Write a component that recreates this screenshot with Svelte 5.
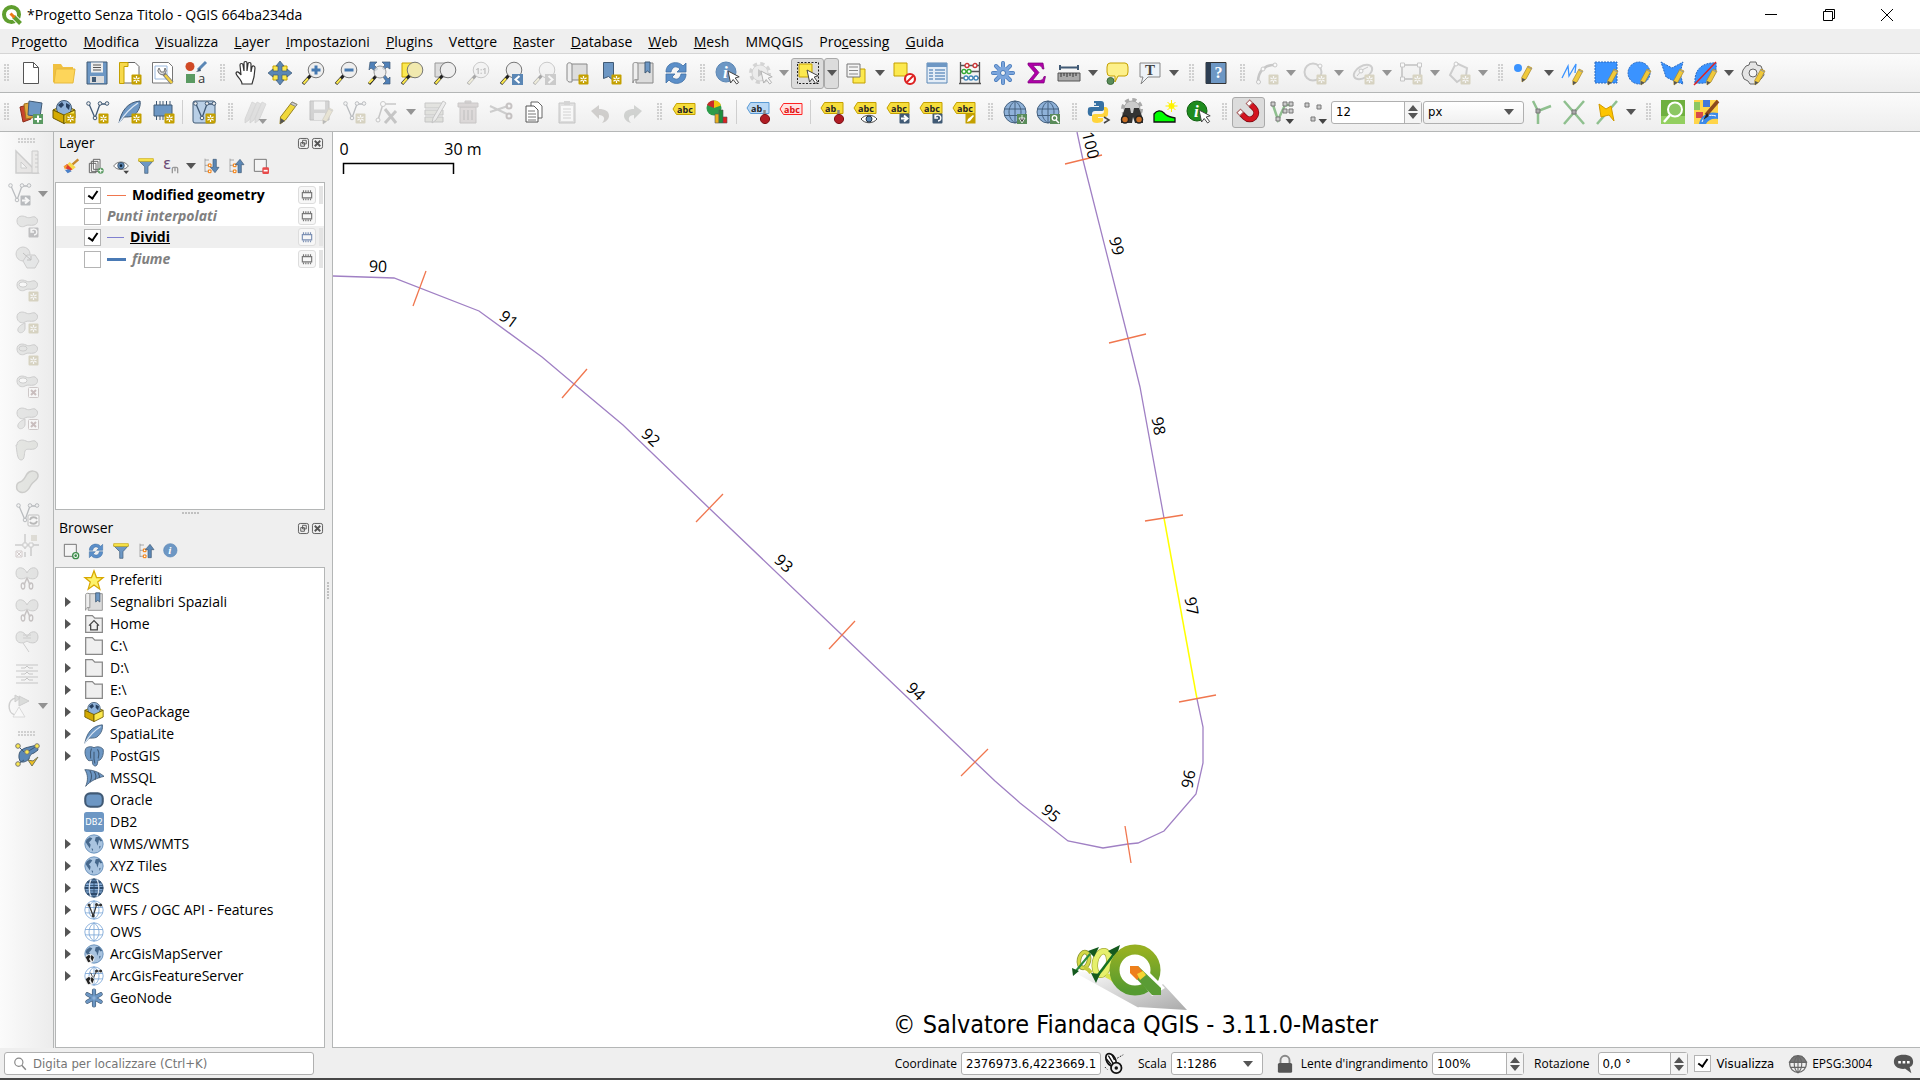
<script lang="ts">
  interface Item {
    kind: "grip" | "sep" | "button" | "arrow";
    icon?: string;
    label?: string;
    off?: boolean;
    on?: boolean;
  }

  const grip: Item = { kind: "grip" };
  const sep: Item = { kind: "sep" };
  const b = (icon: string, label: string): Item => ({ kind: "button", icon, label });
  const off = (icon: string, label: string): Item => ({ kind: "button", icon, label, off: true });
  const on = (icon: string, label: string): Item => ({ kind: "button", icon, label, on: true });
  const arrow = (state = ""): Item => ({
    kind: "arrow",
    label: "Altre opzioni",
    off: state === "off",
    on: state === "on",
  });

  // --- shared icon parts, all on a 24x24 grid ---
  const star =
    '<rect x="13.5" y="13.5" width="10" height="10" rx="1" fill="#c4a000"/><path d="M18.5 15v7M15.4 16.8l6.2 3.5M21.6 16.8l-6.2 3.5" stroke="#fff" stroke-width="1.3"/><circle cx="18.5" cy="18.5" r="1" fill="#c4a000"/>';
  const cursor = '<path d="M13 10l2.600 12 2.600-3.500 3.400 4.500 2-1.500-3.400-4.500 4-1.200z" fill="#fff" stroke="#444"/>';
  const more = '<path d="M15.500 19h8.500l-4.200 5z" fill="#444"/>';
  const lens = (fill: string) =>
    `<path d="M10 14L2 23" stroke="#222" stroke-width="3.200"/><path d="M7 17.500L2.500 22.500" stroke="#fce94f" stroke-width="2"/><circle cx="15" cy="9" r="7.800" fill="${fill}" stroke="#777"/>`;
  const pencil =
    '<path d="M20 8l4 2-6 11-4 3-.3-4.500z" fill="#f0c93a" stroke="#a3842a" stroke-width=".7"/><path d="M14 20l3.500 1.500L14 24z" fill="#555"/><path d="M19.500 9l4 2" stroke="#999"/>';
  const vline =
    '<path d="M4 4l6 14 5-14h6" fill="none" stroke="#415a75" stroke-width="1.300"/><g fill="#eee" stroke="#415a75"><circle cx="3.500" cy="3.500" r="1.800"/><circle cx="10" cy="18" r="1.800"/><circle cx="15" cy="3.500" r="1.800"/><circle cx="22" cy="3.500" r="1.800"/></g>';
  const globe = (fill: string, line: string) =>
    `<circle cx="12" cy="12" r="11" fill="${fill}" stroke="${line}"/><path d="M1.500 9h21M1.500 15.500h21M12 1v22M12 1c-8 5-8 17 0 22M12 1c8 5 8 17 0 22" fill="none" stroke="${line}"/>`;
  const land =
    '<circle cx="12" cy="12" r="11" fill="#a9c4e0" stroke="#5b87b5"/><path d="M3 7l4-3 3 1-2 3-2 2 2 3-1 4-3-4-2-3zM14 4l4-1 4 5-2 1-2-2-1 4-1 3-1-4-2-2zM18 15l2-1-1 4zM9 17l2 1-1 3z" fill="#46688c"/>';
  const tag = (fill: string, line: string, text: string, label = "abc") =>
    `<path d="M1 8l3.500-5.500H23v11H4.500z" fill="${fill}" stroke="${line}"/><text x="5" y="11.500" font-family="Open Sans, sans-serif" font-weight="700" font-size="9" fill="${text}">${label}</text>`;
  const ytag = tag("#f6dd3b", "#c4a000", "#222");
  const pin = '<path d="M18.500 10v9" stroke="#888" stroke-width="2.500"/><circle cx="19" cy="19" r="4.600" fill="#b01c24" stroke="#7c1117"/>';
  const blob = '<path d="M2 7c0-5 5-6 9-4s6-1 9 0c4 2 3 7-1 8-4 1-6-1-9 1S2 12 2 7z" fill="#c4ccc4" stroke="#888"/>';
  const hole = '<ellipse cx="8" cy="6.500" rx="4" ry="2.600" fill="#fff" stroke="#888"/>';
  const drop = '<path d="M10 13c-5 2-8 5-7 8s6 2 7-2z" fill="#c4ccc4" stroke="#888"/>';
  const cross = '<rect x="13.500" y="13.500" width="10" height="10" rx="1" fill="#fff" stroke="#a77"/><path d="M16 16l5 5M21 16l-5 5" stroke="#b55" stroke-width="2"/>';
  const turn = (fill: string) =>
    `<rect x="13.500" y="13.500" width="10" height="10" rx="1" fill="${fill}"/><path d="M16 17a3 3 0 1 1 3 4M16 14.500V18h3" fill="none" stroke="#fff" stroke-width="1.300"/>`;
  const goRight = '<rect x="13.500" y="13.500" width="10" height="10" rx="1" fill="#415a75"/><path d="M15 18.500h5M18 15.500l3.500 3-3.500 3" fill="none" stroke="#fff" stroke-width="2"/>';
  const wings = '<path d="M12 11C8 14 1 14 1 7s8-7 11 0c3-7 11-7 11 0s-7 7-11 4z" fill="#c4ccc4" stroke="#888"/>';
  const treeLines = '<path d="M3 1v20M3 3h6M3 11h5M3 20h5" stroke="#888" fill="none"/><path d="M8 9h4v4H8zM8 18h4v4H8z" fill="#fff" stroke="#f57900" stroke-width="1.500"/>';
  const pkg =
    '<path d="M1 10l11-5 11 5-11 5z" fill="#e8d050" stroke="#6b5800"/><circle cx="12" cy="8" r="7.500" fill="#8fb2d9" stroke="#415a75"/><path d="M6 5l4-3 2 3-3 3zM14 3l4 2-1 5-3-3z" fill="#274060"/><path d="M1 10l11 5v8.500L1 18z" fill="#d4aa00" stroke="#6b5800"/><path d="M23 10l-11 5v8.500L23 18z" fill="#fce94f" stroke="#6b5800"/>';
  const feather =
    '<path d="M1 23C3 12 9 2 22 1c1 4-1 11-7 15-3 1-6 1-9 1z" fill="#6d97c4" stroke="#415a75"/><path d="M1 23C6 15 12 8 20 3" fill="none" stroke="#dce8f5" stroke-width="1.300"/>';
  const chip =
    '<path d="M3 5h18v11H3z" fill="#6d97c4" stroke="#415a75"/><path d="M5.500 1v4M9 1v4M12 1v4M15.500 1v4M19 1v4M5.500 16v4M9 16v4M12 16v4M15.500 16v4M19 16v4" stroke="#415a75"/>';
  const refresh =
    '<path d="M2 11C2 1 14-1 19 5l3-3v9h-9l3-3C12 4 8 6 7 11zM22 13c0 10-12 12-17 6l-3 3v-9h9l-3 3c4 4 8 2 9-3z" fill="#5b8fc9" stroke="#3f6fa5" stroke-width=".8"/>';
  const funnel = '<path d="M1 4h22l-8 9v10h-5V13z" fill="#6d97c4" stroke="#415a75"/><path d="M1 1h22v4H1z" fill="#fce94f" stroke="#c4a000"/>';
  const book = '<path d="M5 2h17v20H5z" fill="#dcdcdc" stroke="#888"/><path d="M2 3c0-2 5-2 5 0v16c-3-1-5 0-5 3z" fill="#eee" stroke="#888"/>';
  const infoDisc = (fill: string, line: string) =>
    `<circle cx="11" cy="11" r="10" fill="${fill}" stroke="${line}"/><text x="8" y="16.500" font-family="Liberation Serif, serif" font-style="italic" font-weight="700" font-size="17" fill="#fff">i</text>`;
  const info = infoDisc("#6d97c4", "#5b87b5");
  const gearRing = (fill: string, line: string, y: number) =>
    `<circle cx="12" cy="${y}" r="9" fill="none" stroke="${line}" stroke-width="4" stroke-dasharray="4 3.070"/><circle cx="12" cy="${y}" r="8" fill="${fill}" stroke="${line}"/>`;
  const folder = '<path d="M2 2h8l3 3h9v17H2z" fill="#efefef" stroke="#888" stroke-width="1.500"/>';
  const snap = (d: string) => `<path d="${d}" stroke="#8fc08f" stroke-width="2.500" fill="none"/>`;

  const icons: Record<string, string> = {
    new: '<path d="M4.500 1.500h10l5 5v16h-15z" fill="#fff" stroke="#555"/><path d="M14.500 1.500v5h5" fill="none" stroke="#555"/>',
    open: '<path d="M1 3h8l2 3h10v15H1z" fill="#f0c040"/><path d="M4 8h19l-2 14H2z" fill="#fdd55a" stroke="#e6b93c"/>',
    save: '<path d="M2 1h20v22H2z" fill="#6d97c4" stroke="#415a75"/><path d="M6 1.500h12v10H6z" fill="#eee"/><path d="M8 4h8M8 6.500h8M8 9h8" stroke="#555"/><path d="M5 15h14v7H5z" fill="#ddd"/><path d="M7 16h4v5H7z" fill="#415a75"/>',
    layout: '<path d="M4 1.500h13l4 4V22H4z" fill="#fff" stroke="#666"/><path d="M1.500 1.500H10v4H6v17H1.500z" fill="#f7d94c" stroke="#c4a000"/>' + star,
    layouts: '<path d="M1.500 1.500h16l4 4V22h-20z" fill="#fff" stroke="#777"/><path d="M4 5h12v13H4z" fill="none" stroke="#9ab8dd"/><path d="M13 13l8 9" stroke="#777" stroke-width="4"/><path d="M14 14l7 8" stroke="#f1cf45" stroke-width="2.500"/><path d="M8 7a4 4 0 1 0 6 0l-1 4h-3z" fill="#ddd" stroke="#777"/>',
    style: '<circle cx="6" cy="5.500" r="4.500" fill="#d04a26"/><path d="M22 1L14 9" stroke="#5b87b5" stroke-width="3"/><path d="M16 7l-4 4 5-1z" fill="#415a75"/><path d="M2 13h9v9H2z" fill="#5a9a62"/><text x="14" y="22" font-family="Open Sans, sans-serif" font-size="13" fill="#333">a</text>',
    pan: '<path d="M7 23c0-4-6-8-6-11 1-2 3-1 5 2L5 4c0-2 3-2 3 0l1 6V2c0-2 3-2 3 0v8l1-7c0-2 3-2 3 0v8l1-5c1-2 3-1 3 1l-1 9-2 7z" fill="#fff" stroke="#333" stroke-width="1.200"/>',
    panSel: '<path d="M5 5h14v14H5z" fill="#fce94f" stroke="#c4a000"/><path d="M12 0l4 5h-2v5h5V8l5 4-5 4v-2h-5v5h2l-4 5-4-5h2v-5H5v2l-5-4 5-4v2h5V5H8z" fill="#5b87b5" stroke="#415a75" stroke-width=".7"/>',
    zoomIn: lens("#eee") + '<path d="M15 4.500v9M10.500 9h9" stroke="#4478b0" stroke-width="3"/>',
    zoomOut: lens("#eee") + '<path d="M10.500 9h9" stroke="#4478b0" stroke-width="3"/>',
    zoomFull: '<path d="M3 1h7L7 4l4 4-3 2-4-3-2 2zM23 1v7l-3-2-3 3-2-2 3-3-3-3zM23 23h-7l3-3-3-4 2-2 3 4 2-2z" fill="#4f80b8" stroke="#415a75" stroke-width=".7"/><path d="M9 15l-7 8" stroke="#222" stroke-width="3"/><path d="M6 18l-4 4" stroke="#fce94f" stroke-width="2"/><circle cx="13" cy="11" r="6" fill="#eee" fill-opacity=".8" stroke="#999"/>',
    zoomSel: '<path d="M2 2h14v14H2z" fill="#fce94f" stroke="#c4a000"/>' + lens("#f1e9ae"),
    zoomLayer: '<path d="M2 2h14v14H2z" fill="#ddd" stroke="#999"/>' + lens("#eee"),
    zoomNative: lens("#eee") + '<text x="9.500" y="12.500" font-family="Open Sans, sans-serif" font-weight="700" font-size="8" fill="#666">1:1</text>',
    zoomLast: lens("#eee") + '<path d="M13 13h11v11H13z" fill="#5b87b5"/><path d="M20.500 15l-4 3.500 4 3.500" fill="none" stroke="#fff" stroke-width="2"/>',
    zoomNext: lens("#eee") + '<path d="M13 13h11v11H13z" fill="#888"/><path d="M16.500 15l4 3.500-4 3.500" fill="none" stroke="#fff" stroke-width="2"/>',
    mapView: '<path d="M5 3h17v16H5z" fill="#ddd" stroke="#888"/><path d="M2 4c0-3 5-3 5 0v17H4c-2-1-2-2-2-3z" fill="#eee" stroke="#888"/>' + star,
    bookmarkNew: '<path d="M5.500 1.500h10v18l-5-4-5 2z" fill="#6d97c4" stroke="#415a75"/>' + star,
    bookmarks: book + '<path d="M14 1h5v11l-2.500-2L14 12z" fill="#6d97c4" stroke="#415a75"/>',
    refresh,
    identify: info + cursor,
    action: gearRing("#ddd", "#999", 12) + '<path d="M10 8l6 4-6 4z" fill="#777"/>' + cursor,
    select: '<path d="M1.500 1.500h21v21h-21z" fill="none" stroke="#222" stroke-dasharray="2 1.500"/><path d="M3 3h13v13H3z" fill="#fce94f" stroke="#c4a000"/><path d="M11 9l2.600 12 2.600-3.500 3.400 5 2-1.500-3.400-5 4-1.200z" fill="#fff" stroke="#444"/>',
    selectForm: '<path d="M9 8h12v14H9z" fill="#fce94f" stroke="#c4a000"/><path d="M3 3h13v13H3z" fill="#f4f4f4" stroke="#777"/><path d="M5 6h9M5 9.500h9M5 13h9" stroke="#888"/>',
    deselect: '<path d="M2 2h13v13H2z" fill="#fce94f" stroke="#c4a000"/><circle cx="18" cy="18" r="5" fill="#fff" stroke="#d22" stroke-width="2.200"/><path d="M14.500 21.500l7-7" stroke="#d22" stroke-width="2"/>',
    table: '<path d="M2 2h20v20H2z" fill="#e4edf7" stroke="#5b87b5"/><path d="M2 2h20v4H2z" fill="#6d97c4"/><path d="M4 9h4M4 12h4M4 15h4M4 18h4M10 9h10M10 12h10M10 15h10M10 18h10" stroke="#6d97c4" stroke-width="1.500"/>',
    abacus: '<path d="M2.500 1v21M21.500 1v21M1 22.500h22M3 4.500h18M3 10.500h18M3 17h18" stroke="#555" stroke-width="1.300"/><g fill="#fff" stroke-width="1.300"><g stroke="#c33"><circle cx="9" cy="4.500" r="2"/><circle cx="17" cy="4.500" r="2"/></g><g stroke="#3a3"><circle cx="6" cy="10.500" r="2"/><circle cx="11" cy="10.500" r="2"/></g><g stroke="#48b"><circle cx="8" cy="17" r="2"/><circle cx="13" cy="17" r="2"/><circle cx="18" cy="17" r="2"/></g></g>',
    gear: '<path d="M12 2v20M2 12h20M5 5l14 14M19 5L5 19" stroke="#4478b8" stroke-width="4" stroke-linecap="round"/><path d="M12 2v20M2 12h20M5 5l14 14M19 5L5 19" stroke="#7ba5dc" stroke-width="2.500" stroke-linecap="round"/><circle cx="12" cy="12" r="6.500" fill="#7ba5dc"/><circle cx="12" cy="12" r="2.500" fill="#f3f3f3" stroke="#4478b8"/>',
    sigma: '<path d="M4 2h15l1 6h-1.500c-1-3-2-3.500-5-3.500H9l6 7-6.500 8H15c3 0 4-1 5-4h1.500L20 22H4v-1.500L11 12 4 4z" fill="#b000a8" stroke="#7a0078" stroke-width=".7"/>',
    measure: '<path d="M3 6.500h18M3 4v5M21 4v5" stroke="#415a75" stroke-width="2"/><path d="M1 12h22v8H1z" fill="#aaa" stroke="#555"/><path d="M4 12v4M7 12v3M10 12v4M13 12v3M16 12v4M19 12v3" stroke="#333"/>',
    tips: '<path d="M5 2h15q3 0 3 4v5q0 4-3 4h-7l-3 6v-6H5q-3 0-3-4V6q0-4 3-4z" fill="#fdf08a" stroke="#c4a000"/><circle cx="5.500" cy="20" r="3.500" fill="#5a8c5a" stroke="#3a6a3a"/>',
    text: '<path d="M2 2h20v14h-12l-7 7 2-7H2z" fill="#eef3f8" stroke="#888"/><text x="7" y="14" font-family="Liberation Serif, serif" font-weight="700" font-size="15" fill="#444">T</text>',
    help: '<path d="M2 1.500h20v21H2z" fill="#6d97c4" stroke="#333"/><path d="M2 1.500h5v21H2z" fill="#2d3e52"/><text x="10.500" y="17" font-family="Liberation Serif, serif" font-weight="700" font-size="16" fill="#fff">?</text>',
    arc: '<path d="M3 21C3 10 10 3 21 4" fill="none" stroke="#777" stroke-width="2.500"/><g fill="#fff" stroke="#777"><circle cx="3.500" cy="21" r="2"/><circle cx="8" cy="8" r="2"/><circle cx="20" cy="4" r="2"/></g>' + star,
    circle: '<circle cx="10" cy="11" r="8.500" fill="#eee" stroke="#888" stroke-width="2"/><circle cx="17" cy="5" r="2" fill="#fff" stroke="#777"/>' + star,
    ellipse: '<ellipse cx="12" cy="11" rx="10" ry="6" transform="rotate(-30 12 11)" fill="#eee" stroke="#888" stroke-width="2"/><path d="M6 15l5-6 6-3" fill="none" stroke="#777"/><circle cx="10" cy="10" r="2" fill="#fff" stroke="#777"/>' + star,
    rect: '<path d="M3 4h18v14H3z" fill="#eee" stroke="#888" stroke-width="2"/><path d="M1.500 2h4v4h-4zM18.500 2h4v4h-4zM1.500 16h4v4h-4z" fill="#fff" stroke="#777"/>' + star,
    polygon: '<path d="M9 2l11 5-1 8-9 6-7-7z" fill="#eee" stroke="#888" stroke-width="2"/><circle cx="9" cy="3" r="2" fill="#fff" stroke="#777"/>' + star,
    drawPoint: '<circle cx="5" cy="7" r="4" fill="#3a93ff"/><g transform="translate(-5 -3)">' + pencil + "</g>",
    drawLine: '<path d="M1 17L7 5l1 10 7-12-1 9" fill="none" stroke="#3a93ff" stroke-width="1.300"/><g transform="translate(-2 0)">' + pencil + "</g>",
    drawRect: '<path d="M1 1h22v21H1z" fill="#3a93ff" stroke="#2a6ac0" stroke-dasharray="2 1"/>' + pencil,
    drawCircle: '<circle cx="12" cy="12" r="11" fill="#3a93ff" stroke="#2a6ac0" stroke-dasharray="2 1"/>' + pencil,
    drawPoly: '<path d="M1 1l11 6 11-6-3 11 3 11-9-3-8-4z" fill="#3a93ff" stroke="#2a6ac0" stroke-dasharray="2 1"/>' + pencil,
    drawSplit: '<path d="M2 22C1 9 9 1 23 2c1 9-2 14-8 19-5 2-9 1-13 1z" fill="#3a93ff" stroke="#2a6ac0" stroke-dasharray="2 1"/>' + pencil + '<path d="M1 24L23 1" stroke="#d22" stroke-width="1.500"/>',
    drawGear: '<path d="M9 1h6l1 3 4 1 2 5 1 4-3 4-3 2-2 3H9l-2-3-4-2-2-5 1-4 3-4 3-1z" fill="#e4e4e4" stroke="#666"/><circle cx="12" cy="12" r="4" fill="#f5f5f5" stroke="#666"/>' + pencil,

    addLayer: '<path d="M1 7l7-2 4 14-8 3z" fill="#c8452d" stroke="#8c2b18"/><path d="M5 4l10-2 2 15-10 2z" fill="#e0a83e" stroke="#a0711c"/><path d="M10 1l13 2-2 14-12-2z" fill="#6d97c4" stroke="#415a75"/><path d="M14 14h10v10H14z" fill="#5a9a62"/><path d="M19 15.500v7M15.500 19h7" stroke="#fff" stroke-width="2"/>',
    geopkg: pkg + star,
    shape: vline + star,
    spatialite: feather + star,
    memory: chip + star,
    virtual: '<rect x="1" y="1" width="22" height="22" rx="2" fill="#b9cfe6" stroke="#415a75"/>' + vline + star,
    edits: '<g stroke="#999" stroke-width=".8" fill="#bbb"><path d="M9 2l4 2-7 16-4 3V19z"/><path d="M14 2l4 2-7 16-4 3V19z"/><path d="M19 2l4 2-7 16-4 3V19z"/></g><path d="M15.500 19h8.500l-4.200 5z" fill="#000"/>',
    edit: '<path d="M16 2l5 2.500L9.500 20 4 24l.5-7z" fill="#f0d83a" stroke="#9a8420"/><path d="M4.500 18l4.500 3-5 3z" fill="#555"/><path d="M16 2l5 2.500-1.500 2-5-2.500z" fill="#ccc" stroke="#888"/>',
    saveEdits: '<path d="M1 1h19v19H1z" fill="#999" stroke="#666"/><path d="M5 1.500h11v8H5z" fill="#eee"/><path d="M5 13h11v7H5z" fill="#ddd"/>' + pencil,
    vertex: '<path d="M3 20L8 4h13" fill="none" stroke="#777" stroke-width="1.500"/><circle cx="8" cy="4" r="2.500" fill="#fff" stroke="#777"/><circle cx="3" cy="20" r="2" fill="#fff" stroke="#777"/><path d="M10 9l11 14M21 11L10 23" stroke="#777" stroke-width="3"/>',
    multiEdit: '<path d="M2 3h18v5H2zM2 10h18v5H2zM2 17h18v5H2z" fill="#bfc3a4" stroke="#777"/><path d="M20 1l3 2-10 17-4 3 1-5z" fill="#ddd" stroke="#777"/>',
    trash: '<path d="M4 7h16v16H4z" fill="#c9a8a8" stroke="#877"/><path d="M2 3h20v4H2zM9 1h6v2H9z" fill="#b99" stroke="#877"/><path d="M8 10v10M12 10v10M16 10v10" stroke="#877" stroke-width="1.500"/>',
    cut: '<path d="M1 6l17 8M1 12l18-6" stroke="#888" stroke-width="2"/><circle cx="20" cy="6" r="2.500" fill="none" stroke="#866" stroke-width="2"/><circle cx="20" cy="16" r="2.500" fill="none" stroke="#866" stroke-width="2"/>',
    copy: '<path d="M9 2h7l4 4v12H9z" fill="#fff" stroke="#666"/><path d="M4 6h8l4 4v12H4z" fill="#fff" stroke="#555"/><path d="M6 11h7M6 14h8M6 17h8M6 20h8" stroke="#777"/>',
    paste: '<path d="M4 3h16v20H4z" fill="#bbb" stroke="#777"/><path d="M6 6h12v15H6z" fill="#fff"/><path d="M8 9h8M8 12h8M8 15h8M8 18h8" stroke="#999"/><path d="M9 1h6v4H9z" fill="#999"/>',
    undo: '<path d="M3 11l8-6v4c6 0 10 2 10 7 0 3-3 6-7 7 4-4 2-8-3-8v4z" fill="#9a8a7a"/>',
    redo: '<path d="M21 11l-8-6v4C7 9 3 11 3 16c0 3 3 6 7 7-4-4-2-8 3-8v4z" fill="#8a9a8a"/>',
    label: '<g transform="translate(0 1)">' + ytag + "</g>",
    diagram: '<circle cx="9" cy="8" r="7.500" fill="#2d9c4b"/><path d="M9 8V.5a7.500 7.500 0 0 1 7 5z" fill="#f1c40f"/><path d="M9 8L2 5a7.500 7.500 0 0 1 7-4.500z" fill="#c92a2a"/><path d="M10 14h4v9h-4z" fill="#e8b020" stroke="#555" stroke-width=".6"/><path d="M14 10h4v13h-4z" fill="#1e8f3e" stroke="#555" stroke-width=".6"/><path d="M18 17h4v6h-4z" fill="#d22" stroke="#555" stroke-width=".6"/>',
    labelPin: tag("#b9d8f5", "#5b9bd5", "#222", "ab") + pin,
    labelRed: '<g transform="translate(0 1)">' + tag("#ffe1e1", "#f22", "#d11") + "</g>",
    labelMovePin: tag("#f6dd3b", "#c4a000", "#222", "ab") + pin,
    labelShow: ytag + '<path d="M8 19c4-5 12-5 16 0-4 5-12 5-16 0z" fill="#fff" stroke="#444"/><circle cx="16" cy="19" r="3" fill="#5b87b5" stroke="#234"/>',
    labelMove: ytag + goRight,
    labelRotate: ytag + turn("#415a75"),
    labelEdit: ytag + '<rect x="13.500" y="13.500" width="10" height="10" fill="#c4a000"/><path d="M15 22l1-3 5-4 1 1-4 5z" fill="#fff"/>',
    metaAdd: globe("#8fb2d9", "#44607e") + '<path d="M14 14h10v10H14z" fill="#5a8c5a"/><path d="M19 15v5M16 18h6l-3 5z" stroke="#fff" fill="#444" stroke-width=".8"/>',
    metaFind: globe("#8fb2d9", "#44607e") + '<path d="M14 14h10v10H14z" fill="#5a8c5a"/><circle cx="18.500" cy="18" r="2.300" fill="none" stroke="#fff" stroke-width="1.300"/><path d="M20 20l3 3" stroke="#fff" stroke-width="1.500"/>',
    python: '<path d="M7 1h7q3 0 3 3v5q0 2-3 2H8q-3 0-3 3v2H3q-3-1-2-7 0-2 3-2h8V6H7z" fill="#3771a3"/><path d="M17 7h2q3 1 2 7 0 3-3 3h-7v1h5v3q-2 2-6 2-5 0-5-3v-4q0-2 3-2h6q3 0 3-3z" fill="#ffd43b"/><path d="M17 17l5 3-5 3" fill="none" stroke="#444" stroke-width="1.500"/><circle cx="8" cy="4" r="1" fill="#fff"/>',
    finder: gearRing("#ccc", "#aaa", 9) + '<path d="M5 8h5l1 5h2l1-5h5l4 11v4h-8l-2-6-1 6H1v-4z" fill="#333"/><circle cx="5" cy="19.500" r="3.500" fill="#c96f26" stroke="#222" stroke-width="1.500"/><circle cx="19" cy="19.500" r="3.500" fill="#c96f26" stroke="#222" stroke-width="1.500"/>',
    profile: '<path d="M1 22V14c3-4 7-4 10-1 3 4 7 4 11 5v4z" fill="#0f0" stroke="#111" stroke-width="1.300"/><circle cx="18.500" cy="6" r="3" fill="#ff0"/><path d="M18.500 0v12M12.500 6h12M14.500 2l8 8M22.500 2l-8 8" stroke="#fe0" stroke-width="1"/>',
    infoTool: infoDisc("#1e8c1e", "#0e5f0e") + cursor,
    magnet: '<g transform="rotate(-45 12 12)" fill="none"><path d="M5.500 8v5a6.500 6.500 0 0 0 13 0V8" stroke="#7a0a12" stroke-width="6"/><path d="M5.500 8v5a6.500 6.500 0 0 0 13 0V8" stroke="#d3141f" stroke-width="4.500"/><path d="M3 4h5v4H3zM16 4h5v4h-5z" fill="#fff" stroke="#a66"/></g>',
    snapVector: snap("M3 5l5 15 7-15h7") + '<g fill="#ccc" stroke="#777"><path d="M1 2h4v4H1zM6 17h4v4H6zM13 2h4v4h-4zM19 2h4v4h-4zM13 9h4v4h-4zM19 9h4v4h-4z"/></g>' + more,
    snapVertex: '<path d="M2 3h4v4H2zM14 5h4v4h-4zM8 17h4v4H8z" fill="#ccc" stroke="#777"/>' + more,
    topo: snap("M4 1l5 10v13M9 11l13-5") + '<path d="M7 9h4v4H7z" fill="#aaa" stroke="#777"/>',
    intersect: snap("M2 1l20 23M22 1L2 24") + '<path d="M10 10h4v4h-4z" fill="#aaa" stroke="#777"/>',
    trace: snap("M22 1L2 24") + '<path d="M4 4l7 5 5-3 3 15-5-6-8 2z" fill="#fdc500" stroke="#d19a00"/>',
    search: '<path d="M0 0h24v24H0z" fill="#6fb03f"/><path d="M0 16h24v8H0z" fill="#93cf60"/><circle cx="14" cy="9.500" r="7" fill="#8cc763" stroke="#fff" stroke-width="2"/><path d="M9 15l-6 7" stroke="#fff" stroke-width="2.500"/>',
    mapEdit: '<path d="M0 0h24v24H0z" fill="#ffd54a"/><path d="M0 2h6v8H0z" fill="#8cc763"/><path d="M9 0h7v7H9z" fill="#4478d8"/><path d="M2 12h7v6H2z" fill="#d84a4a"/><path d="M5 24c2-9 9-13 19-11v6c-6-1-10 1-12 5z" fill="#3d8ae8"/><path d="M8 22c2-6 8-8 14-6" stroke="#fff" fill="none"/><path d="M24 1L12 15" stroke="#8b4a1e" stroke-width="3.500"/><path d="M13 13l-4 7 6-4z" fill="#222"/>',

    cad: '<path d="M1 1v22h22z" fill="#d8ccc4" stroke="#888" stroke-width="1.500"/><path d="M6 12v6h6z" fill="#f4f4f4" stroke="#888"/><path d="M17 1h6v22h-6z" fill="#e4dcd4" stroke="#888"/><path d="M20 5h3M20 9h3M20 13h3M20 17h3" stroke="#888"/>',
    moveFeature: vline + goRight,
    rotate: blob + turn("#667"),
    simplify: '<circle cx="8" cy="8" r="7" fill="#c4ccc4" stroke="#888"/><path d="M12 9h8l4 6-4 7h-8l-4-7z" fill="#c9d3d6" stroke="#888"/><path d="M8 7l8 7M16 10v4h-4" fill="none" stroke="#666"/>',
    addRing: blob + hole + star,
    addPart: blob + drop + star,
    fillRing: blob + hole.replace("#fff", "#c4ccc4") + star,
    deleteRing: blob + hole + cross,
    deletePart: blob + drop + cross,
    reshape: '<path d="M2 7c0-5 5-6 9-4s6-1 9 0c4 2 3 7-1 8-4 1-8-1-9 2s0 9-4 9-4-9-5-15z" fill="#c4ccb4" stroke="#888"/>',
    offset: '<path d="M12 4c3-4 10-4 11 1s-5 6-7 10-6 9-11 7-4-9 0-10 5-5 7-8z" fill="#c4ccb4" stroke="#887" stroke-width="1.500"/>',
    reverse: vline + '<rect x="13" y="13" width="11" height="11" rx="1" fill="#fff" stroke="#666"/><path d="M15 18c1-4 6-3 7-1M22 19c-1 4-6 3-7 1" fill="none" stroke="#555" stroke-width="1.800"/>',
    trim: '<path d="M10 0v15M10 18v5M0 11h24M16 11v11" stroke="#888" stroke-width="1.500" fill="none"/><path d="M8 9h4v4H8zM14 9h4v4h-4z" fill="#fff" stroke="#888"/><path d="M16 1h6v6h-6z" fill="#c9b878"/><path d="M1 17h6v6H1z" fill="#fff" stroke="#b77"/><path d="M2 18l4 4M6 18l-4 4" stroke="#b77"/>',
    split: wings + '<path d="M12 12l3 7M12 12l-3 7" stroke="#866" stroke-width="1.500"/><ellipse cx="8" cy="20" rx="1.800" ry="3" fill="none" stroke="#866" stroke-width="1.300"/><ellipse cx="16" cy="20" rx="1.800" ry="3" fill="none" stroke="#866" stroke-width="1.300"/>',
    merge: wings + '<path d="M8 5h8M8 8h8M8 13l6 9" stroke="#888" fill="none"/>',
    mergeAttr: '<path d="M1 3h22M1 9h22M1 15h22M1 21h22M6 6h4l2-2 2 2h4M6 12h4l2-2 2 2h4M6 18h4l2-2 2 2h4" stroke="#777" fill="none"/>',
    rotateSymbol: '<path d="M8 21C0 19 0 5 9 4" fill="none" stroke="#888" stroke-width="1.500"/><path d="M8 1l5 3-5 4zM12 2l10 5-10 5z" fill="#a9b4a9" stroke="#888"/><path d="M12 13l6 10H6z" fill="#fff" stroke="#aaa"/>',
    checker: '<path d="M4 15C3 7 9 5 14 4l8-2 1 5-4 3c-3 1-4 2-5 6-3 3-7 4-9 2z" fill="#5b87b5" stroke="#415a75"/><path d="M3 3l6 6M3 21l6-4M12 9l10-6" stroke="#415a75" fill="none"/><g fill="#fce94f" stroke="#777"><circle cx="3" cy="3" r="2.300"/><circle cx="3" cy="21" r="2.300"/><circle cx="22" cy="3" r="2.300"/><circle cx="12" cy="9" r="2.300"/></g><path d="M13 17l4 6 6-9-5 4z" fill="#f0c020" stroke="#775"/>',

    brush: '<path d="M23 2l-9 8" stroke="#c98a2b" stroke-width="3.500"/><path d="M10 6l9 8-5 4-9-7z" fill="#f7d94c"/><path d="M1 13l5-4 8 8-4 3z" fill="#e03c30"/><path d="M3 18l6-1 4 3-6 3z" fill="#4a80c8"/><path d="M1 12l6-2-4 8z" fill="#f0a030"/>',
    group: '<path d="M8 2h10v15H8zM5 5h10v15H5zM2 8h10v14H2z" fill="#fff" stroke="#666" stroke-width="1.500"/><circle cx="19" cy="19" r="4.500" fill="#5a9a62"/><path d="M19 16v6M16 19h6" stroke="#fff" stroke-width="1.500"/>',
    eye: '<path d="M1 12C6 4 18 4 23 12 18 19 6 19 1 12z" fill="#fff" stroke="#777" stroke-width="1.500"/><circle cx="12" cy="11.500" r="5" fill="#5b87b5" stroke="#345"/><circle cx="12" cy="11.500" r="2" fill="#123"/>' + more,
    funnel,
    expression: '<text x="0" y="16" font-family="DejaVu Sans, sans-serif" font-size="23" fill="#6b4a75">ε</text><path d="M14 23v-7q0-2 2-2h4q2 0 2 2v7M18 15v5" fill="none" stroke="#999" stroke-width="2"/>',
    expand: treeLines + '<path d="M15 2h5v12h4l-6 8-7-8h4z" fill="#5b87b5" stroke="#415a75"/>',
    collapse: treeLines + '<path d="M15 22h5V10h4l-6-8-7 8h4z" fill="#5b87b5" stroke="#415a75"/>',
    remove: '<path d="M2 2h18v18H2z" fill="#f4f4f4" stroke="#666" stroke-width="1.300"/><rect x="14" y="14" width="10" height="10" rx="2" fill="#e84a4a"/><path d="M16 19h6" stroke="#fff" stroke-width="2.500"/>',
    addSel: '<path d="M2 2h18v18H2z" fill="#f4f4f4" stroke="#666" stroke-width="1.300"/><circle cx="19" cy="19" r="4.500" fill="#fff" stroke="#3c8c4a" stroke-width="2"/><circle cx="19" cy="19" r="2" fill="#3c8c4a"/>',
    info,

    favourite: '<path d="M12 1l3 8h8l-6.500 5.500L19 23l-7-5-7 5 2.500-8.500L1 9h8z" fill="#fdf26a" stroke="#d8a800" stroke-width="1.500"/>',
    home: folder + '<path d="M6 14l6-6 6 6M8 13v6h8v-6" fill="none" stroke="#444" stroke-width="1.500"/>',
    folder,
    package: pkg,
    feather,
    elephant: '<path d="M3 2c4-2 7-1 9 0 4-2 9-1 11 2 1 5-1 11-4 13h-2c-1 2 0 6-3 7-4 0-4-4-4-7-3 1-5 1-6-1C1 12 0 5 3 2z" fill="#6d97c4" stroke="#415a75"/><path d="M9 3c-2 4-1 8-1 12M16 4c3 3 2 7 1 11M12 7v8c0 3 1 4 1 6" fill="none" stroke="#415a75" stroke-width="1.300"/>',
    mssql: '<path d="M1 2c8 0 16 2 23 8-8 2-16 5-22 12 3-7 3-14-1-20z" fill="#6d97c4" stroke="#415a75"/><path d="M7 3c3 5 3 9 0 14M12 4c3 4 3 7 1 10M17 6c2 3 2 4 1 6" fill="none" stroke="#415a75" stroke-width="1.300"/>',
    oracle: '<rect x="1.500" y="4" width="21" height="16" rx="6" fill="#6d97c4" stroke="#415a75" stroke-width="2.500"/>',
    db2: '<rect width="24" height="24" rx="3" fill="#6d97c4"/><text x="1.500" y="15" font-family="DejaVu Sans, sans-serif" font-size="10" fill="#fff">DB2</text>',
    land,
    wcs: globe("#7ea6d2", "#2d4a6b") + '<path d="M4 5h16M1 12h22M4 19h16" stroke="#2d4a6b" stroke-width="2.500"/><path d="M8.500 1.500c-3 6-3 15 0 21M15.500 1.500c3 6 3 15 0 21" stroke="#dce8f5" stroke-width="1.500" fill="none"/>',
    wfs: globe("#fff", "#7aa5d6") + '<path d="M6 6l5 13 4-13h5" fill="none" stroke="#333" stroke-width="1.500"/><g fill="#333"><circle cx="6" cy="6" r="1.800"/><circle cx="11" cy="19" r="1.800"/><circle cx="15" cy="5.500" r="1.800"/><circle cx="20" cy="6" r="1.800"/></g>',
    ows: globe("#fff", "#7aa5d6"),
    arcMap: land + '<circle cx="7" cy="17.500" r="5.500" fill="#eee"/><path d="M2 16l4-3 2 2-2 3 2 3-3 1zM9 13l3 3-2 5-2-4z" fill="#222"/>',
    arcFeature: globe("#fff", "#7aa5d6") + '<path d="M8 8l3 7 4-9h5" fill="none" stroke="#333"/><circle cx="15" cy="6" r="1.800" fill="#333"/><circle cx="20" cy="6" r="1.800" fill="#333"/><circle cx="7" cy="17.500" r="5.500" fill="#eee"/><path d="M2 16l4-3 2 2-2 3 2 3-3 1zM9 13l3 3-2 5-2-4z" fill="#222"/>',
    geonode: '<path d="M12 3v18M4 7.500l16 9M20 7.500l-16 9" stroke="#415a75" stroke-width="5" stroke-linecap="round"/><path d="M12 3v18M4 7.500l16 9M20 7.500l-16 9" stroke="#6d97c4" stroke-width="3.500" stroke-linecap="round"/><circle cx="12" cy="12" r="2" fill="#8fb2d9"/>',
    chipSmall: '<path d="M4 8h16v9H4z" fill="none" stroke="currentColor" stroke-width="2"/><path d="M6 4v3M10 4v3M14 4v3M18 4v3M6 18v3M10 18v3M14 18v3M18 18v3" stroke="currentColor" stroke-width="2"/>',

    mouse: '<ellipse cx="8" cy="8" rx="5" ry="8" transform="rotate(-30 8 8)" fill="#fff" stroke="#111" stroke-width="2"/><path d="M5 3l6 10M9 2l3 6M3 7l5 6" stroke="#111" stroke-width="1.500"/><circle cx="14" cy="17" r="6" fill="#eee" stroke="#111" stroke-width="2"/><circle cx="14" cy="17" r="2" fill="#111"/><path d="M15 6l7-4M1 16l3 3" stroke="#111" stroke-dasharray="2 1.500"/>',
    lock: '<path d="M6 11V7a6 6 0 0 1 12 0v4" fill="none" stroke="#888" stroke-width="2.500"/><rect x="2.500" y="10.500" width="19" height="13" rx="2" fill="#555"/>',
    crs: '<path d="M7 2h10l6 8H1z" fill="#777"/><circle cx="12" cy="12" r="10" fill="none" stroke="#666" stroke-width="1.500"/><path d="M1 10h22M3 16h18M12 2v21M12 2c-6 5-6 15 0 21M12 2c6 5 6 15 0 21" fill="none" stroke="#666" stroke-width="1.300"/>',
    messages: '<path d="M12 2c7 0 11 3 11 8 0 3-1 5-4 6l2 7-7-5c-8 1-13-3-13-8 0-5 4-8 11-8z" fill="#555"/><path d="M6 9h3v3H6zM11 9h3v3h-3zM16 9h3v3h-3z" fill="#fff"/>',
    find: '<circle cx="10" cy="9" r="7" fill="none" stroke="#888" stroke-width="2"/><path d="M15 14l7 8" stroke="#888" stroke-width="2.500"/>',
    float: '<rect x="1" y="1" width="22" height="22" rx="4" fill="none" stroke="#555" stroke-width="2"/><path d="M10 5h8v8h-8z M6 10h8v8H6z" fill="#efefef" stroke="#555" stroke-width="2"/>',
    close: '<rect x="1" y="1" width="22" height="22" rx="4" fill="none" stroke="#555" stroke-width="2"/><path d="M6 6l12 12M18 6L6 18" stroke="#555" stroke-width="4"/>',
  };

  // Menu entries split around the accelerator letter: [before, key, after].
  const menus = [
    ["P", "r", "ogetto"],
    ["", "M", "odifica"],
    ["", "V", "isualizza"],
    ["", "L", "ayer"],
    ["", "I", "mpostazioni"],
    ["", "P", "lugins"],
    ["Vett", "o", "re"],
    ["", "R", "aster"],
    ["", "D", "atabase"],
    ["", "W", "eb"],
    ["", "M", "esh"],
    ["MMQGIS", "", ""],
    ["Pro", "c", "essing"],
    ["", "G", "uida"],
  ];

  const mainBar: Item[] = [
    grip, b("new", "Nuovo progetto"), b("open", "Apri"), b("save", "Salva"), b("layout", "Nuovo layout"), b("layouts", "Gestore layout"), b("style", "Gestore stili"),
    grip, b("pan", "Sposta mappa"), b("panSel", "Sposta sulla selezione"), b("zoomIn", "Ingrandisci"), b("zoomOut", "Rimpicciolisci"), b("zoomFull", "Zoom completo"), b("zoomSel", "Zoom sulla selezione"), b("zoomLayer", "Zoom sul layer"), off("zoomNative", "Risoluzione nativa"), b("zoomLast", "Zoom precedente"), off("zoomNext", "Zoom successivo"), b("mapView", "Nuova vista mappa"), b("bookmarkNew", "Nuovo segnalibro"), b("bookmarks", "Mostra segnalibri"), b("refresh", "Aggiorna"),
    grip, b("identify", "Informazioni elementi"), off("action", "Esegui azione"), arrow("off"), on("select", "Seleziona elementi"), arrow("on"), b("selectForm", "Seleziona per valore"), arrow(), b("deselect", "Deseleziona"), b("table", "Tabella attributi"), b("abacus", "Calcolatore campi"), b("gear", "Strumenti di processing"), b("sigma", "Riepilogo statistico"), b("measure", "Misura"), arrow(), b("tips", "Suggerimenti mappa"), b("text", "Annotazione"), arrow(),
    grip, b("help", "Guida"),
    grip, off("arc", "Curva"), arrow("off"), off("circle", "Cerchio"), arrow("off"), off("ellipse", "Ellisse"), arrow("off"), off("rect", "Rettangolo"), arrow("off"), off("polygon", "Poligono regolare"), arrow("off"),
    grip, b("drawPoint", "Disegna punto"), arrow(), b("drawLine", "Disegna linea"), b("drawRect", "Disegna rettangolo"), b("drawCircle", "Disegna cerchio"), b("drawPoly", "Disegna poligono"), b("drawSplit", "Disegna buffer"), arrow(), b("drawGear", "Impostazioni disegno"),
  ];

  const layerBar: Item[] = [
    grip, b("addLayer", "Gestore sorgenti dati"), b("geopkg", "Nuovo GeoPackage"), b("shape", "Nuovo shapefile"), b("spatialite", "Nuovo SpatiaLite"), b("memory", "Nuovo layer temporaneo"), sep, b("virtual", "Nuovo layer virtuale"),
    grip, off("edits", "Modifiche correnti"), b("edit", "Attiva modifiche"), off("saveEdits", "Salva modifiche"), off("shape", "Aggiungi elemento"), off("vertex", "Strumento vertici"), arrow("off"), off("multiEdit", "Modifica attributi"), off("trash", "Elimina selezionati"), off("cut", "Taglia"), b("copy", "Copia"), off("paste", "Incolla"), off("undo", "Annulla"), off("redo", "Ripeti"),
    grip, b("label", "Etichette"), b("diagram", "Diagrammi"), sep, b("labelPin", "Evidenzia etichette"), b("labelRed", "Etichette non posizionate"), sep, b("labelMovePin", "Blocca etichette"), b("labelShow", "Mostra etichette"), b("labelMove", "Muovi etichetta"), b("labelRotate", "Ruota etichetta"), b("labelEdit", "Cambia etichetta"),
    grip, b("metaAdd", "Aggiungi servizio"), b("metaFind", "Cerca servizi"),
    grip, b("python", "Console Python"), b("finder", "Ricerca avanzata"), b("profile", "Profilo terreno"), b("infoTool", "Value tool"),
    grip, on("magnet", "Abilita aggancio"), b("snapVector", "Tutti i layer"), b("snapVertex", "Vertice"),
  ];
  const snapBar: Item[] = [
    b("topo", "Modifica topologica"), b("intersect", "Aggancia alle intersezioni"), b("trace", "Abilita tracciamento"), arrow(),
    grip, b("search", "Cerca"), b("mapEdit", "Modifica mappa"),
  ];

  const sideBar: [string, string][] = [
    ["cad", "Digitalizzazione avanzata"], ["moveFeature", "Sposta elemento"], ["rotate", "Ruota elemento"], ["simplify", "Semplifica"],
    ["addRing", "Aggiungi buco"], ["addPart", "Aggiungi parte"], ["fillRing", "Riempi buco"], ["deleteRing", "Elimina buco"],
    ["deletePart", "Elimina parte"], ["reshape", "Modifica forma"], ["offset", "Offset curva"], ["reverse", "Inverti linea"],
    ["trim", "Taglia o estendi"], ["split", "Spezza elementi"], ["split", "Spezza parti"], ["merge", "Fondi elementi"],
    ["mergeAttr", "Fondi attributi"], ["rotateSymbol", "Ruota simboli"],
  ];

  const layerTools: Item[] = [
    b("brush", "Stile"), b("group", "Aggiungi gruppo"), b("eye", "Visibilità"), b("funnel", "Filtra legenda"), b("expression", "Filtra per espressione"), arrow(), b("expand", "Espandi tutto"), b("collapse", "Comprimi tutto"), b("remove", "Rimuovi layer"),
  ];
  const browserTools: Item[] = [
    b("addSel", "Aggiungi layer selezionati"), b("refresh", "Aggiorna"), b("funnel", "Filtra browser"), b("collapse", "Comprimi tutto"), b("info", "Proprietà"),
  ];

  let layers = $state([
    { name: "Modified geometry", shown: true, line: "thin-red" },
    { name: "Punti interpolati", shown: false, line: "" },
    { name: "Dividi", shown: true, line: "thin-blue", current: true },
    { name: "fiume", shown: false, line: "thick-blue" },
  ]);

  const sources: [string, string, boolean][] = [
    ["favourite", "Preferiti", false],
    ["bookmarks", "Segnalibri Spaziali", true],
    ["home", "Home", true],
    ["folder", "C:\\", true],
    ["folder", "D:\\", true],
    ["folder", "E:\\", true],
    ["package", "GeoPackage", true],
    ["feather", "SpatiaLite", true],
    ["elephant", "PostGIS", true],
    ["mssql", "MSSQL", false],
    ["oracle", "Oracle", false],
    ["db2", "DB2", false],
    ["land", "WMS/WMTS", true],
    ["land", "XYZ Tiles", true],
    ["wcs", "WCS", true],
    ["wfs", "WFS / OGC API - Features", true],
    ["ows", "OWS", true],
    ["arcMap", "ArcGisMapServer", true],
    ["arcFeature", "ArcGisFeatureServer", true],
    ["geonode", "GeoNode", false],
  ];

  // Map geometry, in canvas pixels.
  const river =
    "0,144 61,146 146,179 209,225 241,252 290,293 376,376 509,503 642,630 662,649 687,671 735,709 770,716 795,712 805,711 831,699 863,662 870,631 870,595 864,567";
  const riverTop = "831,386 807,255 795,206 750,28 744,0";
  const ticks = [
    [93, 139, 80, 174], [254, 237, 229, 266], [390, 362, 363, 390], [522, 489, 496, 517],
    [655, 617, 628, 644], [792, 694, 798, 731], [812, 389, 850, 383], [846, 570, 883, 563],
    [732, 32, 769, 23], [776, 211, 813, 202],
  ];
  const labels: [string, number, number, number][] = [
    ["90", 45, 134, 2], ["91", 176, 187, 36], ["92", 318, 305, 43], ["93", 451, 431, 43], ["94", 583, 559, 43],
    ["95", 718, 681, 40], ["96", 855, 647, -80], ["97", 859, 474, 80], ["98", 826, 294, 80], ["99", 784, 114, 76], ["100", 758, 13, 76],
  ];

  let locator = $state("");
  let render = $state(true);
</script>

{#snippet icon(name: string)}
  <svg class="icon" viewBox="0 0 24 24" aria-hidden="true">{@html icons[name]}</svg>
{/snippet}

{#snippet caret()}
  <svg class="caret" viewBox="0 0 10 6" aria-hidden="true"><path d="M0 0h10L5 6z" fill="currentColor" /></svg>
{/snippet}

{#snippet tools(items: Item[])}
  {#each items as item}
    {#if item.kind === "grip"}
      <span class="grip"></span>
    {:else if item.kind === "sep"}
      <span class="sep"></span>
    {:else if item.kind === "arrow"}
      <button class="more" class:off={item.off} class:on={item.on} aria-label={item.label}>{@render caret()}</button>
    {:else}
      <button class="tool" class:off={item.off} class:on={item.on} aria-label={item.label}>
        {@render icon(item.icon ?? "")}
      </button>
    {/if}
  {/each}
{/snippet}

{#snippet steps()}
  <span class="steps">
    <svg viewBox="0 0 10 16" aria-hidden="true"><path d="M0 7h10L5 1zM0 9h10l-5 6z" fill="#555" /></svg>
  </span>
{/snippet}

{#snippet dockTitle(title: string)}
  <header class="dock-title">
    <h2>{title}</h2>
    <button aria-label="Sgancia {title}">{@render icon("float")}</button>
    <button aria-label="Chiudi {title}">{@render icon("close")}</button>
  </header>
{/snippet}

<div class="window">
  <header class="titlebar">
    <svg class="logo" viewBox="0 0 20 20" aria-hidden="true">
      <circle cx="9.500" cy="9.500" r="7.500" fill="none" stroke="#5f9e2e" stroke-width="4" />
      <path d="M8.500 8.500l10.500 10.500" stroke="#fff" stroke-width="6" />
      <path d="M11.500 11.500l7 7" stroke="#5f9e2e" stroke-width="4" />
      <path d="M8.500 8.500l4 4" stroke="#ee7913" stroke-width="3" />
    </svg>
    <h1>*Progetto Senza Titolo - QGIS 664ba234da</h1>
    <div class="window-buttons">
      <button aria-label="Riduci a icona"><svg viewBox="0 0 12 12"><path d="M0 5.500h12" stroke="#000" /></svg></button>
      <button aria-label="Ripristina">
        <svg viewBox="0 0 12 12"><path d="M.5 2.500h9v9h-9zM2.500 2.500v-2h9v9h-2" fill="none" stroke="#000" /></svg>
      </button>
      <button aria-label="Chiudi"><svg viewBox="0 0 12 12"><path d="M0 0l12 12M12 0L0 12" stroke="#000" /></svg></button>
    </div>
  </header>

  <nav class="menubar">
    {#each menus as [before, key, after]}
      <button>{before}<u>{key}</u>{after}</button>
    {/each}
  </nav>

  <div class="toolbar">{@render tools(mainBar)}</div>
  <div class="toolbar">
    {@render tools(layerBar)}
    <div class="field tolerance">
      <input type="text" value="12" aria-label="Tolleranza" />
      {@render steps()}
    </div>
    <div class="field units">
      <select aria-label="Unità"><option>px</option></select>
      {@render caret()}
    </div>
    {@render tools(snapBar)}
  </div>

  <div class="workspace">
    <div class="sidebar">
      <span class="grip"></span>
      {#each sideBar as [name, label]}
        <div class="side-row">
          <button class="tool off" aria-label={label}>{@render icon(name)}</button>
          {#if name === "moveFeature" || name === "rotateSymbol"}
            <button class="more off" aria-label="{label}: opzioni">{@render caret()}</button>
          {/if}
        </div>
      {/each}
      <span class="grip"></span>
      <div class="side-row"><button class="tool" aria-label="Controllo topologia">{@render icon("checker")}</button></div>
    </div>

    <aside class="docks">
      <section class="dock layers">
        {@render dockTitle("Layer")}
        <div class="dock-tools">{@render tools(layerTools)}</div>
        <ul class="box">
          {#each layers as layer}
            <li class:current={layer.current} class:hidden={!layer.shown} class:plain={!layer.line}>
              <label>
                <input type="checkbox" bind:checked={layer.shown} />
                {#if layer.line}<span class="line {layer.line}"></span>{/if}
                <span class="name">{layer.name}</span>
              </label>
              <button class="chip" aria-label="Rendi permanente {layer.name}">{@render icon("chipSmall")}</button>
              <span class="mark"></span>
            </li>
          {/each}
        </ul>
      </section>

      <div class="splitter"></div>

      <section class="dock browser">
        {@render dockTitle("Browser")}
        <div class="dock-tools">{@render tools(browserTools)}</div>
        <ul class="box">
          {#each sources as [name, label, branch]}
            <li>
              <svg class="twist" viewBox="0 0 7 10" aria-hidden="true">
                {#if branch}<path d="M0 0l6 5-6 5z" fill="#555" />{/if}
              </svg>
              {@render icon(name)}
              <span>{label}</span>
            </li>
          {/each}
        </ul>
      </section>
    </aside>
    <div class="splitter upright"></div>

    <main class="map">
      <svg class="canvas" role="img" aria-label="Mappa">
        <defs>
          <linearGradient id="shade" x1="0" y1="0" x2="1" y2="1">
            <stop offset="0" stop-color="#fff" />
            <stop offset="1" stop-color="#aaa" />
          </linearGradient>
          <linearGradient id="ring" x1="0" y1="0" x2="0" y2="1">
            <stop offset="0" stop-color="#96b022" />
            <stop offset="1" stop-color="#559a30" />
          </linearGradient>
        </defs>

        <g fill="none">
          <polyline points={river} stroke="#a080c4" stroke-width="1.300" />
          <polyline points={riverTop} stroke="#a080c4" stroke-width="1.300" />
          <path d="M864 567L831 386" stroke="#ffff00" stroke-width="1.500" />
          {#each ticks as [x1, y1, x2, y2]}
            <line {x1} {y1} {x2} {y2} stroke="#f0764e" stroke-width="1.300" />
          {/each}
          <path d="M10.500 42V31.500h110V42" stroke="#000" stroke-width="1.500" />
        </g>

        <g class="map-labels">
          {#each labels as [text, x, y, angle]}
            <text transform="translate({x} {y}) rotate({angle})" dy="6">{text}</text>
          {/each}
          <text x="11" y="23">0</text>
          <text x="130" y="23">30 m</text>
        </g>

        <g>
          <path d="M739 839L806 876 805 875 854 878 830 852 820 860 790 842z" fill="url(#shade)" />
          <g fill="none">
            <ellipse cx="751" cy="828" rx="5" ry="8" transform="rotate(12 751 828)" stroke="#8a9430" stroke-width="4.500" />
            <ellipse cx="751" cy="828" rx="5" ry="8" transform="rotate(12 751 828)" stroke="#d3d846" stroke-width="3" />
            <path d="M751 836q4 0 7 5" stroke="#c3c93c" stroke-width="4" />
            <path d="M742 840l15-18" stroke="#2a8a3c" stroke-width="2" />
            <ellipse cx="769" cy="831" rx="7" ry="12" transform="rotate(12 769 831)" stroke="#a8ae3c" stroke-width="6.500" />
            <ellipse cx="769" cy="831" rx="7" ry="12" transform="rotate(12 769 831)" stroke="#e6f06c" stroke-width="5" />
            <path d="M773 843q5 2 9 6" stroke="#d9e44e" stroke-width="5" />
            <path d="M762 847l19-25" stroke="#147022" stroke-width="2.500" />
          </g>
          <path d="M766 815l-11 4 6 6zM787 813l-12 6 8 7zM739 836l7 3-6 5zM758 841l9 1-4 9z" fill="#145a1e" />
          <circle cx="802" cy="838" r="20.500" fill="#fff" stroke="url(#ring)" stroke-width="10" />
          <path d="M812 836l20 20-13 8-14-18z" fill="#fff" />
          <path d="M797 834h8l23 22v7h-9l-22-23z" fill="#5a9c35" />
          <path d="M797 834h8l5 6-6 8-7-7z" fill="#ee7f1c" />
          <path d="M804 842l6-3 3 4-6 5z" fill="#f6d432" />
        </g>
        <text class="credit" x="560" y="901">© Salvatore Fiandaca QGIS - 3.11.0-Master</text>
      </svg>
    </main>
  </div>

  <footer class="statusbar">
    <div class="field locator">
      {@render icon("find")}
      <input type="text" placeholder="Digita per localizzare (Ctrl+K)" aria-label="Localizza" bind:value={locator} />
    </div>
    <div class="pair">
      <label for="coords">Coordinate</label>
      <div class="field coords"><input id="coords" type="text" value="2376973.6,4223669.1" /></div>
      <button class="status-icon" aria-label="Estensione">{@render icon("mouse")}</button>
    </div>
    <div class="pair scale-pair">
      <label for="scale">Scala</label>
      <div class="field scale">
        <select id="scale"><option>1:1286</option></select>
        {@render caret()}
      </div>
    </div>
    <div class="pair magnifier-pair">
      <button class="status-icon lock" aria-label="Blocca scala">{@render icon("lock")}</button>
      <label for="magnifier">Lente d'ingrandimento</label>
      <div class="field spin"><input id="magnifier" type="text" value="100%" />{@render steps()}</div>
    </div>
    <div class="pair rotation-pair">
      <label for="rotation">Rotazione</label>
      <div class="field spin"><input id="rotation" type="text" value="0,0 °" />{@render steps()}</div>
    </div>
    <label class="render"><input type="checkbox" bind:checked={render} />Visualizza</label>
    <button class="crs">{@render icon("crs")}EPSG:3004</button>
    <button class="status-icon" aria-label="Messaggi">{@render icon("messages")}</button>
  </footer>
  <div class="edge"></div>
</div>

<style>
  :global(body) {
    margin: 0;
    background: #efefef;
  }
  .window {
    display: flex;
    flex-direction: column;
    height: 100vh;
    overflow: hidden;
    background: #efefef;
    color: #000;
    font: 14px/20px "Open Sans", "Noto Sans", sans-serif;
  }
  button,
  input,
  select {
    margin: 0;
    padding: 0;
    border: 0;
    background: none;
    color: inherit;
    font: inherit;
  }
  h1,
  h2,
  ul {
    margin: 0;
    padding: 0;
    font: inherit;
    list-style: none;
  }
  svg {
    display: block;
    flex: none;
  }
  .icon {
    width: 24px;
    height: 24px;
    overflow: visible;
  }
  .caret {
    width: 10px;
    height: 6px;
    color: #555;
  }

  .titlebar {
    display: flex;
    align-items: center;
    height: 29px;
    padding: 0 4px 0 2px;
    background: #fff;
  }
  .logo {
    width: 20px;
    height: 20px;
    margin-right: 5px;
  }
  .window-buttons {
    display: flex;
    margin-left: auto;
  }
  .window-buttons button {
    display: grid;
    place-items: center;
    width: 58px;
    height: 29px;
  }
  .window-buttons svg {
    width: 12px;
    height: 12px;
  }

  .menubar {
    display: flex;
    gap: 16px;
    height: 23px;
    padding: 1px 0 0 11px;
    border-bottom: 1px solid #d5d5d5;
  }

  .toolbar {
    display: flex;
    align-items: center;
    height: 38px;
    border-bottom: 1px solid #b4b6b6;
    background: linear-gradient(#fbfbfb, #eee);
  }
  .grip {
    flex: none;
    width: 5px;
    height: 18px;
    margin: 0 5px 0 8px;
    background: radial-gradient(circle at 1px 1px, #d0d0d0 1px, transparent 1px) 0 0 / 3px 3px;
  }
  .grip:first-child {
    margin-left: 4px;
  }
  .sep {
    flex: none;
    width: 1px;
    height: 24px;
    margin: 0 4px 0 3px;
    background: #cfcfcf;
  }
  .tool,
  .more {
    display: grid;
    flex: none;
    place-items: center;
    width: 33px;
    height: 31px;
  }
  .more {
    width: 15px;
  }
  .off .icon {
    opacity: 0.36;
    filter: grayscale(0.7);
  }
  .off .caret {
    opacity: 0.6;
  }
  .tool.on,
  .more.on {
    box-sizing: border-box;
    border: 1px solid #aaa;
    border-radius: 3px;
    background: #dcdcdc;
  }

  .field {
    display: flex;
    flex: none;
    align-items: center;
    box-sizing: border-box;
    height: 23px;
    border: 1px solid #b0b0b0;
    border-radius: 3px;
    background: #fff;
    font-family: "DejaVu Sans Condensed", "Noto Sans", sans-serif;
    font-size: 13px;
  }
  .field input,
  .field select {
    flex: 1;
    min-width: 0;
    padding: 0 4px;
    appearance: none;
    outline: none;
  }
  .field .caret {
    margin-right: 9px;
  }
  .steps {
    display: grid;
    place-items: center;
    width: 16px;
    height: 100%;
    border-left: 1px solid #b0b0b0;
    background: #f5f5f5;
  }
  .steps svg {
    width: 10px;
    height: 16px;
  }
  .tolerance {
    width: 91px;
  }
  .units {
    width: 101px;
    margin-left: 1px;
    background: linear-gradient(#fff, #f0f0f0);
  }

  .workspace {
    display: flex;
    flex: 1;
    min-height: 0;
  }
  .sidebar {
    display: flex;
    flex: none;
    flex-direction: column;
    width: 53px;
    border-right: 1px solid #b4b6b6;
    background: linear-gradient(90deg, #fbfbfb, #ececec);
  }
  .sidebar .grip,
  .sidebar .grip:first-child {
    align-self: center;
    width: 17px;
    height: 5px;
    margin: 9px 0 3px;
  }
  .sidebar .grip:first-child {
    margin: 6px 0 3px;
  }
  .side-row {
    display: flex;
    align-items: center;
    justify-content: center;
    height: 32px;
  }

  .docks {
    display: flex;
    flex: none;
    flex-direction: column;
    width: 270px;
    margin-left: 1px;
  }
  .dock {
    display: flex;
    flex-direction: column;
    min-height: 0;
  }
  .layers {
    flex: 378 0 0;
  }
  .browser {
    flex: 531 0 0;
  }
  .splitter {
    flex: none;
    align-self: center;
    width: 17px;
    height: 3px;
    margin: 2px 0;
    background: radial-gradient(circle at 1px 1px, #c0c0c0 1px, transparent 1px) 0 0 / 3px 3px;
  }
  .splitter.upright {
    width: 3px;
    height: 17px;
    margin: 0 2px;
  }
  .dock-title {
    display: flex;
    gap: 3px;
    align-items: center;
    height: 22px;
    padding: 0 2px 0 4px;
  }
  .dock-title h2 {
    flex: 1;
  }
  .dock-title .icon {
    width: 11px;
    height: 11px;
  }
  .dock-tools {
    display: flex;
    align-items: center;
    height: 24px;
    padding: 0 3px 4px;
  }
  .dock-tools .tool {
    width: 25px;
    height: 24px;
  }
  .dock-tools .icon {
    width: 16px;
    height: 16px;
  }
  .box {
    flex: 1;
    min-height: 0;
    padding-top: 1px;
    overflow: hidden;
    border: 1px solid #b4b6b6;
    background: #fff;
  }
  .box li {
    display: flex;
    align-items: center;
    height: 22px;
  }
  .layers li.plain {
    height: 20px;
  }
  .layers li.current {
    background: #efefef;
  }
  .layers label {
    display: flex;
    flex: 1;
    align-items: center;
    padding-left: 28px;
    font-weight: 700;
  }
  input[type="checkbox"] {
    box-sizing: border-box;
    width: 17px;
    height: 17px;
    border: 1px solid #b4b4b4;
    background: #fff;
    appearance: none;
  }
  input[type="checkbox"]:checked::before {
    display: block;
    width: 4px;
    height: 8px;
    margin: 1px 0 0 5px;
    border: solid #000;
    border-width: 0 2px 2px 0;
    content: "";
    transform: rotate(35deg);
  }
  .name {
    margin-left: 6px;
  }
  .hidden .name {
    color: #808080;
    font-style: italic;
  }
  .current .name {
    text-decoration: underline;
  }
  .line {
    width: 19px;
    height: 1px;
    margin-left: 6px;
    background: #f0764e;
  }
  .thin-blue {
    width: 17px;
    background: #8080d0;
  }
  .thick-blue {
    height: 3px;
    background: #4a7ab5;
  }
  .chip {
    display: grid;
    place-items: center;
    width: 18px;
    height: 18px;
    border: 1px solid #ddd;
    border-radius: 3px;
    background: #f7f7f7;
    box-sizing: border-box;
    color: #777;
  }
  .current .chip {
    color: #7c90b4;
  }
  .chip .icon {
    width: 14px;
    height: 14px;
  }
  .mark {
    width: 4px;
    height: 18px;
    margin: 0 1px 0 3px;
    background: #e4e4e4;
  }
  .plain .mark {
    background: none;
  }
  .browser li {
    padding-left: 9px;
  }
  .browser li .icon {
    width: 20px;
    height: 20px;
    margin: 0 6px 0 12px;
  }
  .twist {
    width: 7px;
    height: 10px;
  }

  .map {
    flex: 1;
    min-width: 0;
    border: solid #b4b6b6;
    border-width: 0 0 1px 1px;
    background: #fff;
  }
  .canvas {
    width: 100%;
    height: 100%;
  }
  .map-labels {
    font-size: 16px;
    text-anchor: middle;
  }
  .credit {
    font-family: "DejaVu Sans Condensed", "Noto Sans", sans-serif;
    font-size: 25px;
  }

  .statusbar {
    display: flex;
    align-items: center;
    height: 29px;
    padding: 1px 6px 0 4px;
    font-size: 12px;
  }
  .locator {
    width: 310px;
    margin-right: auto;
  }
  .locator .icon {
    width: 14px;
    height: 14px;
    margin: 0 2px 0 8px;
  }
  .pair,
  .render,
  .crs {
    display: flex;
    align-items: center;
  }
  .pair label {
    padding-top: 1px;
    margin-right: 4px;
  }
  .coords {
    width: 140px;
  }
  .status-icon .icon {
    width: 21px;
    height: 21px;
    margin-left: 3px;
  }
  .scale-pair {
    margin-left: 13px;
  }
  .scale {
    width: 92px;
  }
  .magnifier-pair {
    margin-left: 10px;
  }
  .lock .icon {
    width: 18px;
    height: 18px;
    margin-right: 7px;
  }
  .spin {
    width: 92px;
  }
  .rotation-pair {
    margin-left: 10px;
  }
  .rotation-pair label {
    margin-right: 8px;
  }
  .rotation-pair .spin {
    width: 90px;
  }
  .render {
    gap: 6px;
    margin-left: 6px;
    font-family: "DejaVu Sans Condensed", "Noto Sans", sans-serif;
    font-size: 13px;
  }
  .crs {
    gap: 4px;
    margin: 0 18px 0 14px;
  }
  .crs .icon {
    width: 20px;
    height: 20px;
  }
  .edge {
    height: 2px;
    background: #484848;
  }
</style>
